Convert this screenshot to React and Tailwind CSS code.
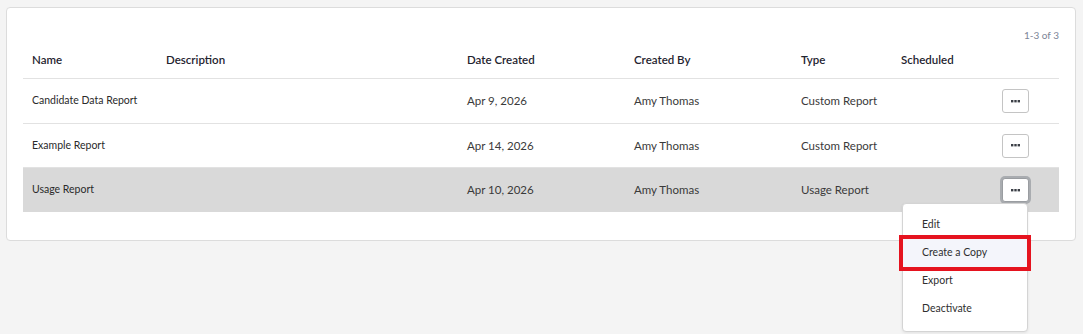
import React from 'react'

const reports = [
  { name: 'Candidate Data Report', description: '', date: 'Apr 9, 2026', createdBy: 'Amy Thomas', type: 'Custom Report', scheduled: '' },
  { name: 'Example Report', description: '', date: 'Apr 14, 2026', createdBy: 'Amy Thomas', type: 'Custom Report', scheduled: '' },
  { name: 'Usage Report', description: '', date: 'Apr 10, 2026', createdBy: 'Amy Thomas', type: 'Usage Report', scheduled: '', active: true }
]

const menuItems = ['Edit', 'Create a Copy', 'Export', 'Deactivate']

const cols = 'grid grid-cols-[134px_301px_167px_167px_100px_1fr_57px] items-center'

function Dots() {
  return (
    <svg width="9" height="3" viewBox="0 0 9 3">
      <rect x="0" y="0" width="2.4" height="2.4" fill="#3b3f46" />
      <rect x="3.3" y="0" width="2.4" height="2.4" fill="#3b3f46" />
      <rect x="6.6" y="0" width="2.4" height="2.4" fill="#3b3f46" />
    </svg>
  )
}

function ActionMenu() {
  return (
    <div className="absolute right-[1px] top-[calc(100%+1px)] z-10 w-[126px] rounded-[4px] border border-[#d4d4d4] bg-white pt-[7px] pb-[8px] shadow-[0_1px_3px_rgba(0,0,0,0.08)]">
      {menuItems.map((item) => (
        <div
          key={item}
          className={`flex h-[28px] items-center pl-[19px] text-[10.5px] text-[#2f2f2f] ${
            item === 'Create a Copy' ? 'bg-[#f4f5fb] outline-4 outline-[#e5131f]' : ''
          }`}
        >
          {item}
        </div>
      ))}
    </div>
  )
}

export default function App() {
  return (
    <div className="min-h-screen bg-[#f4f4f4] px-[6px] pt-[7px] font-['Lato',sans-serif]">
      <div className="mr-[1px] rounded-[4px] border border-[#dcdcdc] bg-white px-[16px] pt-[20px] pb-[28px]">
        {/* Pagination */}
        <div className="flex h-[14px] items-center justify-end text-[10px] text-[#7c8597]">1-3 of 3</div>

        {/* Header */}
        <div className={`${cols} h-[37px] border-b border-[#e2e2e2] text-[11.5px] font-semibold text-[#1f2430]`}>
          <div className="pl-[9px]">Name</div>
          <div className="pl-[9px]">Description</div>
          <div className="pl-[9px]">Date Created</div>
          <div className="pl-[9px]">Created By</div>
          <div className="pl-[9px]">Type</div>
          <div className="pl-[9px]">Scheduled</div>
          <div />
        </div>

        {/* Rows */}
        {reports.map((r, i) => (
          <div
            key={r.name}
            className={`${cols} ${i === 0 ? 'h-[45px]' : 'h-[44px]'} text-[11.5px] text-[#3a3a3a] ${
              r.active ? 'bg-[#d9d9d9]' : ''
            } ${i < reports.length - 1 ? 'border-b border-[#e2e2e2]' : ''}`}
          >
            <div className="pl-[9px] text-[10.5px] text-[#2a2a2a]">{r.name}</div>
            <div className="pl-[9px]">{r.description}</div>
            <div className="pl-[9px]">{r.date}</div>
            <div className="pl-[9px]">{r.createdBy}</div>
            <div className="pl-[9px]">{r.type}</div>
            <div className="pl-[9px]">{r.scheduled}</div>
            <div className="relative flex w-[27px] justify-start">
              <button
                className={`flex h-[24px] w-[27px] items-center justify-center rounded-[3px] border bg-white ${
                  r.active ? 'border-[#9a9da1] ring-[2px] ring-[#a9acb0]' : 'border-[#c4c4c4]'
                }`}
              >
                <Dots />
              </button>
              {r.active && <ActionMenu />}
            </div>
          </div>
        ))}
      </div>
    </div>
  )
}
